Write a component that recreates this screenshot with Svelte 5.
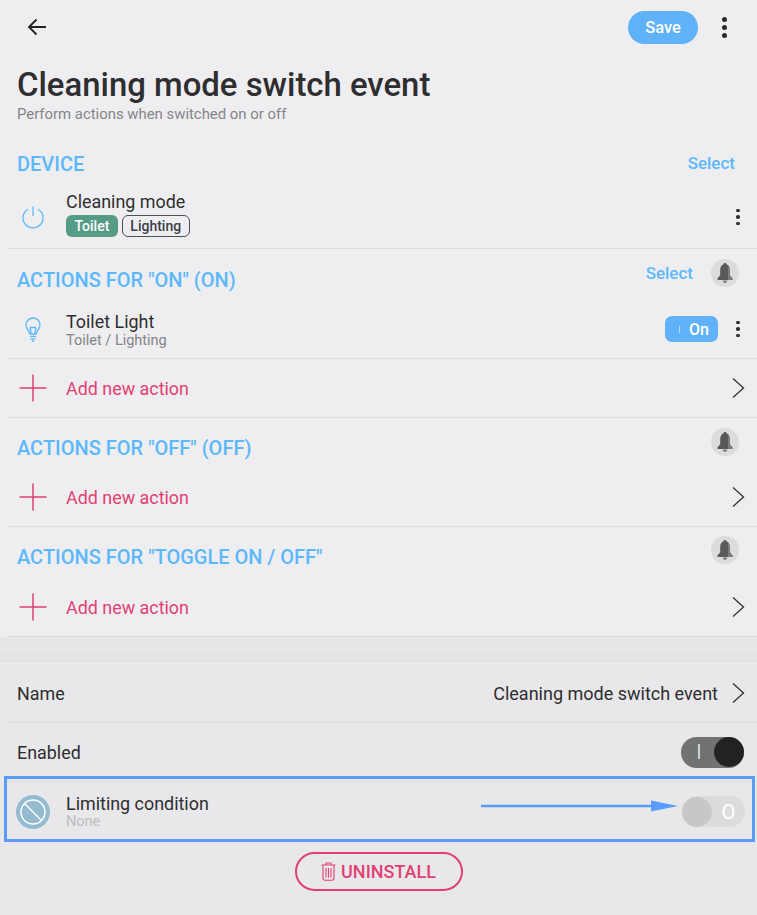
<script lang="ts">
  const actionGroups = [
    { title: 'ACTIONS FOR "OFF" (OFF)', tall: false },
    { title: 'ACTIONS FOR "TOGGLE ON / OFF"', tall: true },
  ];
</script>

{#snippet bell()}
  <span class="bell">
    <svg width="18" height="22" viewBox="0 0 18 22">
      <path d="M9 1c-1 0-1.600.7-1.700 1.600C5 3.400 4.200 5.500 4.200 8.500v4.800L1.500 16.500V18h15v-1.500l-2.700-3.200V8.500c0-3-.8-5.100-3.100-5.900C10.600 1.700 10 1 9 1z" fill="#58595b" />
      <path d="M12 4.500c1.300 1 1.800 2.400 1.800 4v4.800l2.700 3.200V18H12z" fill="#7c7d7f" />
      <path d="M6.800 18.500h4.400c0 1.400-1 2.500-2.200 2.500s-2.200-1.100-2.200-2.500z" fill="#7c7d7f" />
    </svg>
  </span>
{/snippet}

{#snippet dots(big = false)}
  <span class="dots" class:big>
    <i></i><i></i><i></i>
  </span>
{/snippet}

{#snippet chevron()}
  <svg class="chevron" width="14" height="22" viewBox="0 0 14 22">
    <path d="M2 1.500 12.500 11 2 20.500" fill="none" stroke="#333" stroke-width="1.300" />
  </svg>
{/snippet}

{#snippet addRow()}
  <div class="row add-row">
    <span class="row-icon">
      <svg width="28" height="28" viewBox="0 0 28 28">
        <path d="M14 0.500v27M0.500 14h27" stroke="#e23f72" stroke-width="1.500" />
      </svg>
    </span>
    <span class="add-label">Add new action</span>
    {@render chevron()}
  </div>
{/snippet}

<div class="page">
  <header class="topbar">
    <svg class="back" width="20" height="18" viewBox="0 0 20 18">
      <path d="M19 9H2.500M9.500 1.500 2 9l7.500 7.500" fill="none" stroke="#222" stroke-width="1.800" />
    </svg>
    <div class="topbar-right">
      <button class="save">Save</button>
      {@render dots(true)}
    </div>
  </header>

  <div class="intro">
    <h1>Cleaning mode switch event</h1>
    <p>Perform actions when switched on or off</p>
  </div>

  <section class="group device">
    <div class="group-head">
      <h2>DEVICE</h2>
      <span class="select">Select</span>
    </div>
    <div class="row device-row">
      <span class="row-icon">
        <svg width="24" height="24" viewBox="0 0 24 24">
          <path d="M12 1.500v9.500M7 4.200a10 10 0 1 0 10 0" fill="none" stroke="#5cb8fb" stroke-width="1.300" />
        </svg>
      </span>
      <div class="row-text">
        <div class="row-title">Cleaning mode</div>
        <div class="tags">
          <span class="tag room">Toilet</span>
          <span class="tag cat">Lighting</span>
        </div>
      </div>
      {@render dots()}
    </div>
  </section>

  <section class="group">
    <div class="group-head tall">
      <h2>ACTIONS FOR "ON" (ON)</h2>
      <div class="head-tools">
        <span class="select">Select</span>
        {@render bell()}
      </div>
    </div>
    <div class="row light-row">
      <span class="row-icon">
        <svg width="16" height="25" viewBox="0 0 16 25">
          <path d="M5 17C4.500 14 1 12.300 1 8 1 4 4.100 1 8 1s7 3 7 7c0 4.300-3.500 6-4 9zM5 17h6M5 19.400h6M5.500 21.800h5M6.800 24h2.400M5 10.500l1.300 6.500M11 10.500 9.700 17M5 10.500h6" fill="none" stroke="#5cb8fb" stroke-width="1.300" />
        </svg>
      </span>
      <div class="row-text">
        <div class="row-title">Toilet Light</div>
        <div class="row-sub spaced">Toilet / Lighting</div>
      </div>
      <span class="state"><i></i>On</span>
      {@render dots()}
    </div>
    {@render addRow()}
  </section>

  {#each actionGroups as group}
    <section class="group" class:last={group.tall}>
      <div class="group-head" class:tall={group.tall}>
        <h2>{group.title}</h2>
        <div class="head-tools">
          {@render bell()}
        </div>
      </div>
      {@render addRow()}
    </section>
  {/each}

  <div class="settings">
    <div class="band"></div>
    <div class="row setting">
      <span class="setting-label">Name</span>
      <span class="setting-value">Cleaning mode switch event</span>
      {@render chevron()}
    </div>
    <div class="row setting">
      <span class="setting-label">Enabled</span>
      <span class="toggle on"><b>I</b><i></i></span>
    </div>
    <div class="row limit-row">
      <span class="row-icon">
        <svg width="34" height="34" viewBox="0 0 34 34">
          <circle cx="17" cy="17" r="17" fill="#94bbcf" />
          <circle cx="17" cy="17" r="12" fill="none" stroke="#fff" stroke-width="1.500" />
          <path d="M8.500 8.500l17 17" stroke="#fff" stroke-width="1.500" />
        </svg>
      </span>
      <div class="row-text">
        <div class="row-title">Limiting condition</div>
        <div class="row-sub muted">None</div>
      </div>
      <span class="toggle off"><i></i><b>O</b></span>

      <!-- annotation drawn over the screenshot -->
      <svg class="arrow" width="200" height="14" viewBox="0 0 200 14">
        <path d="M0 7h172" stroke="#5b9bfb" stroke-width="2.500" />
        <path d="M170 1.500 197 7l-27 5.500z" fill="#5b9bfb" />
      </svg>
      <span class="callout"></span>
    </div>
    <div class="uninstall-wrap">
      <button class="uninstall">
        <svg width="15" height="19" viewBox="0 0 15 19">
          <path d="M5 2.500V1h5v1.500M.5 3h14M2 3.500V16c0 1.300.7 2.200 2 2.200h7c1.300 0 2-.9 2-2.200V3.500M5 6v9.500M7.500 6v9.500M10 6v9.500" fill="none" stroke="#e23f72" stroke-width="1.100" />
        </svg>
        UNINSTALL
      </button>
    </div>
  </div>
</div>

<style>
  :global(body) {
    background: #eeeef1;
    font-family: Roboto, "Liberation Sans", sans-serif;
  }
  .page {
    width: 757px;
    height: 915px;
    overflow: hidden;
    color: #2e2e30;
  }
  .topbar {
    height: 54px;
    display: flex;
    align-items: center;
    justify-content: space-between;
    padding: 0 30px 0 27px;
  }
  .topbar-right { display: flex; align-items: center; gap: 24px; }
  .save {
    width: 70px;
    height: 33px;
    border: none;
    border-radius: 17px;
    background: #5fb1f8;
    color: #fff;
    font: 500 16.5px Roboto, sans-serif;
    padding: 0;
  }
  .dots { display: inline-flex; flex-direction: column; gap: 3px; width: 4px; }
  .dots i { width: 3.5px; height: 3.5px; border-radius: 50%; background: #2e2e30; }
  .dots.big { width: 5px; }
  .dots.big i { width: 5px; height: 5px; background: #2a2a2c; }

  .intro { padding: 0 17px; height: 83px; }
  h1 {
    margin: 0;
    padding-top: 11px;
    font-size: 32.9px;
    line-height: 39px;
    font-weight: 500;
    color: #2e2e30;
  }
  .intro p {
    margin: 2px 0 0;
    font-size: 14.9px;
    line-height: 17px;
    color: #858587;
  }

  .group-head {
    height: 50px;
    display: flex;
    align-items: center;
    justify-content: space-between;
    padding: 0 18px 0 17px;
  }
  .group-head.tall { height: 51px; }
  .device .group-head { height: 49px; padding-right: 22px; }
  h2 {
    margin: 0;
    font-size: 20px;
    font-weight: 500;
    color: #5cb8fb;
    padding-top: 10px;
  }
  .device h2 { padding-top: 5px; }
  .last h2 { padding-top: 8px; }
  .last .head-tools { margin-bottom: 5px; }
  .select { color: #5cb8fb; font-size: 17px; font-weight: 500; }
  .device .select { padding-top: 3px; }
  .head-tools {
    display: flex;
    align-items: center;
    gap: 18px;
    margin-bottom: 3px;
  }
  .bell {
    width: 28px;
    height: 28px;
    border-radius: 50%;
    background: #dcdcde;
    display: flex;
    align-items: center;
    justify-content: center;
  }

  .row {
    margin-left: 8px;
    display: flex;
    align-items: center;
    border-bottom: 1px solid #dcdcde;
    padding-right: 17px;
  }
  .row-icon {
    width: 50px;
    flex: none;
    display: flex;
    justify-content: center;
  }
  .row-text { flex: 1; margin-left: 8px; }
  .row-title { font-size: 17.9px; line-height: 21px; }
  .row-sub { font-size: 14.5px; line-height: 16px; color: #858587; }
  .row-sub.spaced { margin-top: 1px; }
  .row-sub.muted { color: #bdbdbf; }

  .device-row { height: 62px; }
  .device-row .row-text { margin-bottom: 6px; }
  .tags { display: flex; gap: 4px; margin-top: 3px; }
  .tag {
    height: 22px;
    box-sizing: border-box;
    border-radius: 6px;
    padding: 0 8.5px;
    font-size: 14px;
    font-weight: 500;
    line-height: 22px;
  }
  .tag.room { background: #559c86; color: #fff; }
  .tag.cat { border: 1px solid #4a4f58; color: #3c4048; line-height: 20px; padding: 0 7.5px; }

  .light-row { height: 58px; }
  .light-row .row-text { margin-top: 2px; }
  .state {
    width: 53px;
    height: 26px;
    box-sizing: border-box;
    border-radius: 7px;
    background: #5fb1f8;
    color: #fff;
    font-size: 16px;
    font-weight: 500;
    display: flex;
    align-items: center;
    justify-content: flex-end;
    padding-right: 9px;
    position: relative;
    margin-right: 18px;
  }
  .state i {
    position: absolute;
    left: 14px;
    top: 10px;
    width: 1px;
    height: 7px;
    background: #b7dcfb;
  }

  .add-row { height: 58px; }
  .add-label {
    flex: 1;
    margin-left: 8px;
    font-size: 17.9px;
    color: #e23f72;
  }
  .chevron { flex: none; margin-right: -5px; }

  .settings {
    height: 278px;
    background: #e8e8ea;
  }
  .band {
    height: 27px;
    box-sizing: border-box;
    background: linear-gradient(#e6e6e8 11px, #ebebed 11px, #ebebed 12px, #e6e6e8 12px);
    border-bottom: 1px solid #eeeef0;
  }
  .setting { height: 58px; }
  .setting-label { flex: 1; margin-left: 9px; font-size: 17.9px; }
  .setting-value { font-size: 18px; margin-right: 13px; }

  .toggle {
    width: 63px;
    height: 31px;
    border-radius: 16px;
    display: flex;
    align-items: center;
    margin-right: -5px;
  }
  .toggle i { width: 30px; height: 30px; border-radius: 50%; display: block; }
  .toggle b { flex: 1; text-align: center; font-weight: 400; color: #fff; font-size: 20px; }
  .toggle.on { background: #707274; margin-right: -4px; }
  .toggle.on i { background: #212224; }
  .toggle.on b { font-weight: 300; padding-left: 3px; }
  .toggle.off { background: #dcdcde; }
  .toggle.off i { background: #c7c7c9; }

  .limit-row {
    height: 59px;
    position: relative;
    border-bottom: none;
  }
  .limit-row .row-text { margin-bottom: 1px; }
  .arrow { position: absolute; left: 473px; top: 17px; }
  .callout {
    position: absolute;
    left: -4px;
    top: -6px;
    width: 751px;
    height: 66px;
    box-sizing: border-box;
    border: 3px solid #5b9bfb;
  }

  .uninstall-wrap {
    display: flex;
    justify-content: center;
    padding: 11px 0 10px;
    border-bottom: 1px solid #ececee;
  }
  .uninstall {
    width: 168px;
    height: 39px;
    border: 2px solid #e23f72;
    border-radius: 20px;
    background: transparent;
    color: #e23f72;
    font: 500 18px Roboto, sans-serif;
    display: flex;
    align-items: center;
    justify-content: center;
    gap: 5px;
    padding: 0;
  }
</style>
